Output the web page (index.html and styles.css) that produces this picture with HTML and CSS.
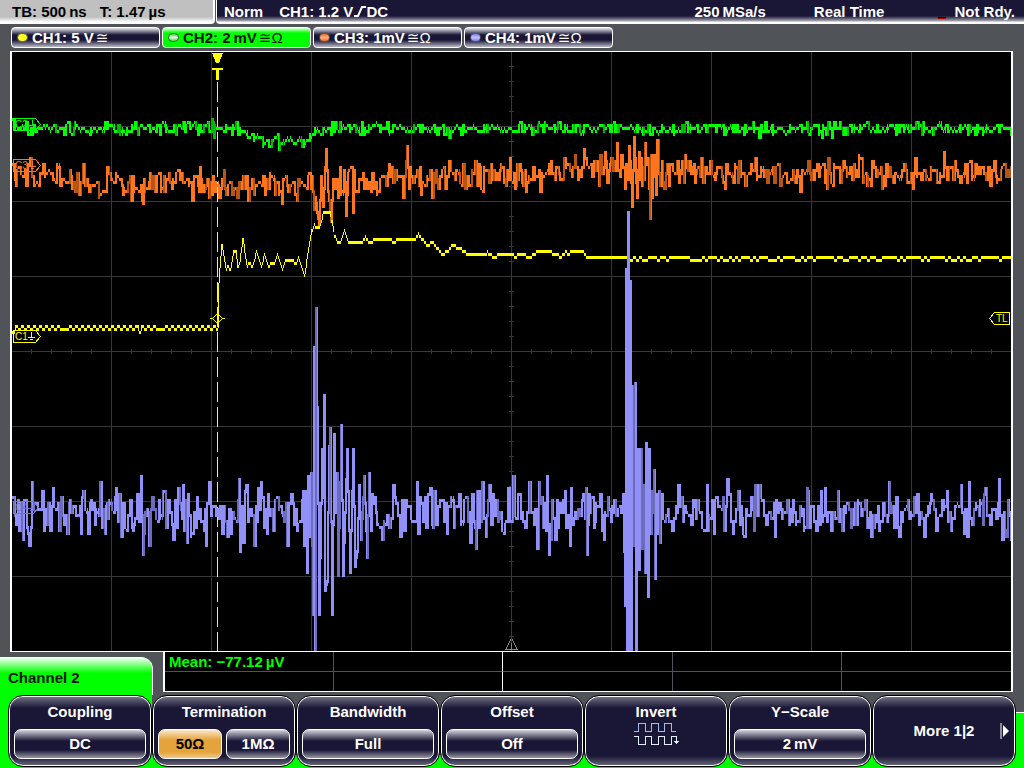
FILE: index.html
```html
<!DOCTYPE html>
<html lang="en">
<head>
    <meta charset="UTF-8">
    <meta name="viewport" content="width=device-width, initial-scale=1.0">
    <title>Oscilloscope</title>
    <link rel="stylesheet" href="styles.css">
</head>
<body>
    <header class="status">
        <div class="timebase">
            <span>TB: 500&#8201;ns</span>
            <span>T: 1.47&#8201;µs</span>
        </div>
        <div class="trigger">
            <span>Norm</span>
            <span class="source">CH1: 1.2 V<svg class="edge" width="12" height="11" viewBox="0 0 12 11"><path d="M0 10H4L8 1H12" fill="none" stroke="#fff" stroke-width="2"/></svg>DC</span>
            <span class="rate">250&#8201;MSa/s</span>
            <span class="mode">Real Time</span>
            <span class="led"></span>
            <span>Not Rdy.</span>
        </div>
    </header>

    <nav class="channels">
        <button class="channel ch1"><i class="dot"></i>CH1: 5 V<span class="thin">≅</span></button>
        <button class="channel ch2 active"><i class="dot"></i>CH2: 2&#8201;mV<span class="thin">≅Ω</span></button>
        <button class="channel ch3"><i class="dot"></i>CH3: 1mV<span class="thin">≅Ω</span></button>
        <button class="channel ch4"><i class="dot"></i>CH4: 1mV<span class="thin">≅Ω</span></button>
    </nav>

    <main class="screen">
        <svg class="plot" viewBox="12 52 999 599" preserveAspectRatio="none" shape-rendering="crispEdges">
            <path id="grid" class="grid"/>
            <path class="position" d="M511 639L506 649H517L512 639M511 643V649"/>
            <path class="trigger-line" d="M217.5 82V651"/>
            <g id="traces"></g>
            <path class="fill1" d="M212 53H223L219 63H216ZM212 68H223V70H219V80H216V70H212Z"/>
            <path class="line1" d="M212.5 318.5L217.5 313.5L222.5 318.5L217.5 323.5ZM210 318.5H213M222 318.5H225"/>

            <g class="marker m2">
                <path d="M13.5 118.5H35.5L40.5 124.5L35.5 130.5H13.5ZM32.5 120V125M29 125.5H36M31 127.5H34"/>
                <text x="15" y="128">C2</text>
            </g>
            <g class="marker m3">
                <path d="M13.5 159.5H35.5L40.5 165.5L35.5 171.5H13.5ZM32.5 161V166M29 166.5H36M31 168.5H34"/>
                <text x="15" y="169">C3</text>
            </g>
            <g class="marker m1">
                <path d="M13.5 330.5H35.5L40.5 336.5L35.5 342.5H13.5ZM31.5 332V337M28 337.5H35M30 339.5H33"/>
                <text x="15" y="340">C1</text>
            </g>
            <g class="marker m4">
                <path d="M13.5 501.5H33.5L38.5 507.5L33.5 513.5H13.5ZM31.5 503V508M28 508.5H35M30 510.5H33"/>
                <text x="15" y="511">C4</text>
            </g>
            <g class="marker m1">
                <path d="M1009.5 312.5H994.5L989.5 318.5L994.5 324.5H1009.5Z"/>
                <text x="996" y="322">TL</text>
            </g>
        </svg>
    </main>

    <section class="results">
        <h1 class="title">Channel 2</h1>
        <table class="measure">
            <tr><td>Mean: −77.12&#8201;µV</td><td></td><td></td><td></td><td></td></tr>
            <tr><td></td><td></td><td></td><td></td><td></td></tr>
        </table>
    </section>

    <footer class="menu">
        <div class="item" role="group" aria-labelledby="coupling">
            <span id="coupling">Coupling</span>
            <div class="options"><button>DC</button></div>
        </div>
        <div class="item" role="group" aria-labelledby="termination">
            <span id="termination">Termination</span>
            <div class="options"><button class="selected">50Ω</button><button>1MΩ</button></div>
        </div>
        <div class="item" role="group" aria-labelledby="bandwidth">
            <span id="bandwidth">Bandwidth</span>
            <div class="options"><button>Full</button></div>
        </div>
        <div class="item" role="group" aria-labelledby="offset">
            <span id="offset">Offset</span>
            <div class="options"><button>Off</button></div>
        </div>
        <button class="item">
            <span>Invert</span>
            <svg class="waves" width="48" height="28" viewBox="0 0 48 28" fill="none" shape-rendering="crispEdges">
                <path stroke="#a9b9ea" d="M2 10.5H6.5V2.5H13.5V10.5H19.5V2.5H26.5V10.5H32.5V2.5H39.5V10.5H44"/>
                <path stroke="#e4ecff" d="M2 15.5H6.5V23.5H13.5V15.5H19.5V23.5H26.5V15.5H32.5V23.5H39.5V15.5H44.5V22M42 20.5H47M43 21.5H46M44 22.5H45"/>
            </svg>
        </button>
        <div class="item" role="group" aria-labelledby="yscale">
            <span id="yscale">Y−Scale</span>
            <div class="options"><button>2&#8201;mV</button></div>
        </div>
        <button class="item more">
            More 1|2
            <svg class="next" width="10" height="16" viewBox="0 0 10 16"><path d="M1 0V16" stroke="#fff"/><path d="M3 2L9 8L3 14Z" fill="#fff"/></svg>
        </button>
    </footer>

    <script src="scope.js"></script>
</body>
</html>
```

FILE: styles.css
```css
* {
    box-sizing: border-box;
}
body {
    margin: 0;
    min-height: 100vh;
    display: flex;
    flex-direction: column;
    background: #505459;
    color: #fff;
    font: bold 15px/18px "Liberation Sans", "DejaVu Sans", Arial, sans-serif;
    white-space: nowrap;
}
button {
    margin: 0;
    padding: 0;
    font: inherit;
    color: inherit;
    cursor: pointer;
}

/* top bar */
.status {
    display: flex;
    gap: 1px;
    height: 24px;
}
.timebase,
.trigger {
    display: flex;
    padding-top: 3px;
    border-bottom: 1px solid #fff;
}
.timebase {
    width: 215px;
    gap: 13px;
    padding-left: 12px;
    color: #000;
    background: linear-gradient(#c0c0c0 17px, #fff 22px);
    border-right: 2px solid #fff;
    border-radius: 0 0 4px 0;
}
.trigger {
    flex: 1;
    padding-left: 7px;
    padding-right: 9px;
    background: linear-gradient(#1a1636 16px, #a7a6b2 21px, #fff 22px);
    border-left: 1px solid #fff;
    border-radius: 0 0 0 4px;
}
.source {
    margin-left: 16px;
}
.edge {
    margin: 0 0 0 1px;
}
.rate {
    margin-left: auto;
}
.mode {
    margin: 0 54px 0 48px;
}
.led {
    width: 8px;
    height: 2px;
    margin: 14px 8px 0 0;
    background: #b00000;
    border-top: 1px solid #000;
}

/* channel tabs */
.channels {
    display: flex;
    gap: 2px;
    padding: 3px 11px;
}
.channel {
    display: flex;
    align-items: center;
    width: 149px;
    height: 21px;
    padding-left: 5px;
    border: 1px solid #fff;
    border-radius: 4px;
    background: linear-gradient(#e8e8ee, #1a1636 7px, #1a1636 12px, #b9b8c5);
}
.channel.active {
    color: #001800;
    background: linear-gradient(#e0ffe0, #00ff00 5px);
}
.dot {
    width: 11px;
    height: 9px;
    margin-right: 4px;
    border: 1px solid #555;
    border-radius: 5px;
}
.ch1 .dot { background: #ffff20; }
.ch2 .dot { background: linear-gradient(#40d040, #e0ffe0, #40d040); }
.ch3 .dot { background: linear-gradient(#ff6a20, #ffb080, #ff6a20); }
.ch4 .dot { background: linear-gradient(#8080ff, #c0c0ff, #8080ff); }
.thin {
    font-weight: normal;
    margin-left: 2px;
}

/* plot */
.screen {
    flex: 1;
    display: flex;
    margin: 0 11px 0 10px;
    background: #000;
    border: 2px solid #fff;
    border-width: 1px 2px;
}
.plot {
    flex: 1;
    width: 100%;
    min-width: 0;
}
.plot path {
    fill: none;
    stroke-width: 1;
}
.plot .grid { stroke: #383838; }
.plot .position { stroke: #888; }
.plot .trigger-line {
    stroke: #ffff00;
    stroke-dasharray: 20 5;
}
.plot .fill1 { fill: #ffff00; }
.plot .line1 { stroke: #ffff00; }
.plot .t1 { stroke: #ffff00; }
.plot .t2 { stroke: #00ff00; }
.plot .t3 { stroke: #ff741c; }
.plot .t4 { stroke: #9090f8; }
.plot .t2.dim { stroke: #00b800; }
.plot .t3.dim { stroke: #b85414; }
.plot .t4.dim { stroke: #6c6cb8; }
.marker text {
    font-size: 10px;
    font-weight: normal;
}
.m1 path { stroke: #ffff00; }
.m1 text { fill: #ffff00; }
.m2 path { stroke: #00ff00; }
.m2 text { fill: #00ff00; }
.m3 path { stroke: #ff741c; }
.m3 text { fill: #ff741c; }
.m4 path { stroke: #7474d0; }
.m4 text { fill: #7474d0; }

/* channel title and measurements */
.results {
    display: flex;
    height: 43px;
    padding-right: 11px;
    gap: 10px;
}
.title {
    flex: none;
    width: 153px;
    margin: 5px 0 0;
    padding: 12px 8px 0;
    font: inherit;
    color: #001800;
    background: linear-gradient(#fff, #00ff00 16px);
    border-right: 1px solid #fff;
    border-radius: 0 12px 0 0;
}
.measure {
    width: 100%;
    height: 40px;
    table-layout: fixed;
    border-spacing: 0;
    color: #00ff00;
    background: #000;
    border: 2px solid #fff;
    border-width: 0 2px 1px;
}
.measure td {
    height: 19px;
    padding: 0 4px;
    border-right: 1px solid #505459;
}
.measure tr:first-child td {
    height: 20px;
    border-bottom: 1px solid #505459;
}
.measure td:nth-child(2) {
    border-right-color: #fff;
}
.measure td:last-child {
    border-right: 0;
}

/* soft keys */
.menu {
    display: flex;
    height: 73px;
    padding: 0 8px 1px;
    background:
        linear-gradient(#00ff00, #00ff00) left / 152px 100% no-repeat,
        linear-gradient(#fff 1px, #00ff00 1px) right bottom / 8px 56px no-repeat,
        linear-gradient(#00ff00, #00ff00) bottom / 100% 13px no-repeat;
}
.item {
    flex: 1;
    display: flex;
    flex-direction: column;
    align-items: center;
    min-width: 0;
    padding: 7px 5px 7px;
    border: 1px solid #000;
    border-radius: 15px;
    box-shadow: inset 0 0 0 1px #fff;
    background: linear-gradient(#77768a, #1a1636 12px, #1a1636 60px, #6b6a7c);
}
.options {
    display: flex;
    gap: 4px;
    width: 100%;
    margin-top: auto;
}
.options button {
    flex: 1;
    height: 30px;
    border: 1px solid #fff;
    border-radius: 7px;
    background: linear-gradient(#d4d4dc, #1a1636 11px, #1a1636 20px, #9998a5);
}
.options .selected {
    color: #000;
    background: linear-gradient(#fbe8cc, #e5a33b 10px, #e5a33b 22px, #f0c88a);
}
.more {
    position: relative;
    justify-content: center;
}
.next {
    position: absolute;
    right: 5px;
}
```

FILE: scope.js
```js
// repeatable noise, so the traces are the same on every load
let seed = 7;
function rnd() {
    seed = (seed * 16807) % 2147483647;
    return seed / 2147483647;
}
function gauss() {
    return rnd() + rnd() + rnd() + rnd() - 2;
}

// graticule: 10 x 8 divisions with ticks on the centre axes
let grid = "";
for (let x = 111; x < 1011; x += 100) grid += `M${x + 0.5} 52V651`;
for (let y = 126; y < 651; y += 75) grid += `M12 ${y + 0.5}H1011`;
for (let x = 31; x < 1011; x += 20) grid += `M${x + 0.5} 349V354`;
for (let y = 66; y < 651; y += 15) grid += `M509 ${y + 0.5}H514`;
document.getElementById("grid").setAttribute("d", grid);

function interpolate(points, x) {
    for (let i = 1; i < points.length; i++) {
        if (x <= points[i][0]) {
            const [x0, y0] = points[i - 1];
            const [x1, y1] = points[i];
            return y0 + (y1 - y0) * (x - x0) / (x1 - x0);
        }
    }
    return points[points.length - 1][1];
}

// one vertical stroke per column, levels are 3px high
// span is the number of samples that one column covers
function draw(name, points, dimShare, span) {
    let bright = "";
    let dim = "";
    let levels = [];
    let isDim = false;
    for (let x = 12; x < 1011; x++) {
        const y = Math.round((interpolate(points, x) - 1) / 3) * 3 + 1;
        levels.push(y);
        levels = levels.slice(-span);
        if (x % 2) isDim = rnd() < dimShare;
        const high = Math.min(...levels);
        const low = Math.max(...levels);
        let top = y;
        let bottom = y + 3;
        if (low - high > 3) {
            top = high;
            bottom = low + (span > 2 ? 3 : 0);
        }
        top = Math.max(52, top);
        bottom = Math.min(651, bottom);
        const column = `M${x + 0.5} ${top}V${bottom}`;
        if (isDim && bottom - top > 5) dim += column;
        else bright += column;
    }
    const g = document.getElementById("traces");
    [["", bright], [" dim", dim]].forEach(([suffix, d]) => {
        const path = document.createElementNS("http://www.w3.org/2000/svg", "path");
        path.setAttribute("class", name + suffix);
        path.setAttribute("d", d);
        g.appendChild(path);
    });
}

// each level holds for one or two columns
function noisy(base, amplitude, spikes) {
    const points = [];
    let x = 12;
    while (x <= 1012) {
        const y = interpolate(base, x) + gauss() * amplitude(x);
        const hold = rnd() < 0.5 ? 2 : 1;
        for (let i = 0; i < hold; i++, x++) {
            if (!spikes.some(s => x >= s[0][0] && x <= s[s.length - 1][0])) points.push([x, y]);
        }
    }
    spikes.forEach(s => points.push(...s));
    return points.sort((a, b) => a[0] - b[0]);
}

// CH1
const ch1 = [];
for (let x = 12; x < 216; x += 3) {
    const y = (x % 2 ? 325 : 328) + (rnd() < 0.1 ? 3 : 0);
    ch1.push([x, y], [x + 2, y]);
}
ch1.push(
    [216, 328], [217, 328], [218, 282], [219, 267], [221, 244], [223, 256], [225, 269], [227, 265], [230, 269],
    [233, 251], [235, 251], [237, 269], [239, 262], [242, 238], [246, 266], [249, 262], [252, 266], [256, 250],
    [261, 266], [264, 253], [268, 266], [270, 262], [274, 262], [277, 253], [282, 269], [285, 260], [293, 260],
    [296, 263], [298, 256], [304, 275], [307, 253], [311, 230], [314, 223], [316, 227], [319, 226], [323, 211],
    [329, 211], [333, 231], [337, 241], [340, 241], [344, 229], [348, 241], [362, 241], [365, 236], [369, 241],
    [375, 238], [391, 238], [393, 241], [398, 238], [415, 238], [418, 233], [422, 238], [427, 244], [432, 241],
    [442, 253], [447, 250], [452, 244], [460, 247], [467, 253], [485, 253], [487, 250], [489, 253], [495, 256],
    [498, 252], [505, 253], [516, 255], [520, 252], [529, 256], [533, 253], [537, 250], [551, 250], [553, 253],
    [561, 255], [565, 251], [569, 252], [572, 250], [582, 250], [586, 255]
);
for (let x = 588; x < 1012; x += 3) {
    const y = rnd() < (x < 690 ? 0.2 : 0.4) ? 259 : 256;
    ch1.push([x, y], [x + 2, y]);
}

// CH2, slight dip after the trigger
const base2 = [[12, 127], [242, 127], [250, 135], [262, 140], [302, 140], [312, 131], [320, 127], [600, 127], [780, 128], [1011, 127]];
const ch2 = noisy(base2, () => 5, []);

// CH3
const base3 = [[12, 172], [50, 172], [70, 180], [150, 184], [300, 183], [345, 183], [400, 177], [520, 173], [560, 166], [660, 168], [720, 172], [1011, 172]];
const ch3 = noisy(base3, x => (x > 625 && x < 665 ? 24 : 14), [
    [[311, 175], [313, 207], [314, 196], [318, 224], [320, 176], [322, 205], [325, 148], [327, 190], [330, 221], [332, 178]],
    [[344, 180], [345, 214], [347, 172], [351, 165], [352, 211]],
    [[404, 176], [406, 146], [408, 186]],
    [[629, 160], [631, 204], [633, 136], [635, 180]],
    [[647, 158], [649, 216], [650, 155], [651, 196], [653, 154]]
]);

// CH4, two bursts
const base4 = [[12, 511], [1011, 511]];
const ch4 = noisy(base4, x => (x < 560 ? 26 : 22), [
    [[302, 490], [303, 545], [304, 491], [306, 570], [307, 476], [309, 535], [310, 472], [312, 614], [313, 346], [314, 651],
     [315, 307], [317, 502], [318, 612], [321, 448], [322, 495], [323, 394], [324, 588], [326, 579], [328, 445], [329, 427],
     [331, 612], [333, 433], [335, 510], [336, 472], [337, 573], [339, 481], [340, 424], [342, 573], [346, 448], [349, 570],
     [352, 448], [354, 564], [356, 550], [358, 484], [360, 538], [363, 475], [366, 555], [368, 472], [370, 530]],
    [[622, 494], [624, 603], [625, 268], [626, 651], [627, 211], [628, 651], [629, 280], [630, 651], [631, 385], [632, 520],
     [633, 543], [634, 382], [635, 651], [637, 448], [638, 568], [640, 448], [641, 546], [642, 484], [644, 570], [645, 442],
     [647, 594], [648, 448], [650, 531], [653, 469], [654, 576], [655, 493], [656, 531], [658, 490], [659, 540], [661, 493]],
    [[546, 475], [547, 530], [548, 552]],
    [[585, 487], [586, 552], [588, 493]],
    [[236, 520], [238, 478], [239, 549], [241, 505]],
    [[139, 520], [140, 474], [142, 552], [144, 510]]
]);

draw("t2", ch2, 0.2, 3);
draw("t3", ch3, 0.25, 3);
draw("t1", ch1, 0, 2);
draw("t4", ch4, 0.25, 3);
```
